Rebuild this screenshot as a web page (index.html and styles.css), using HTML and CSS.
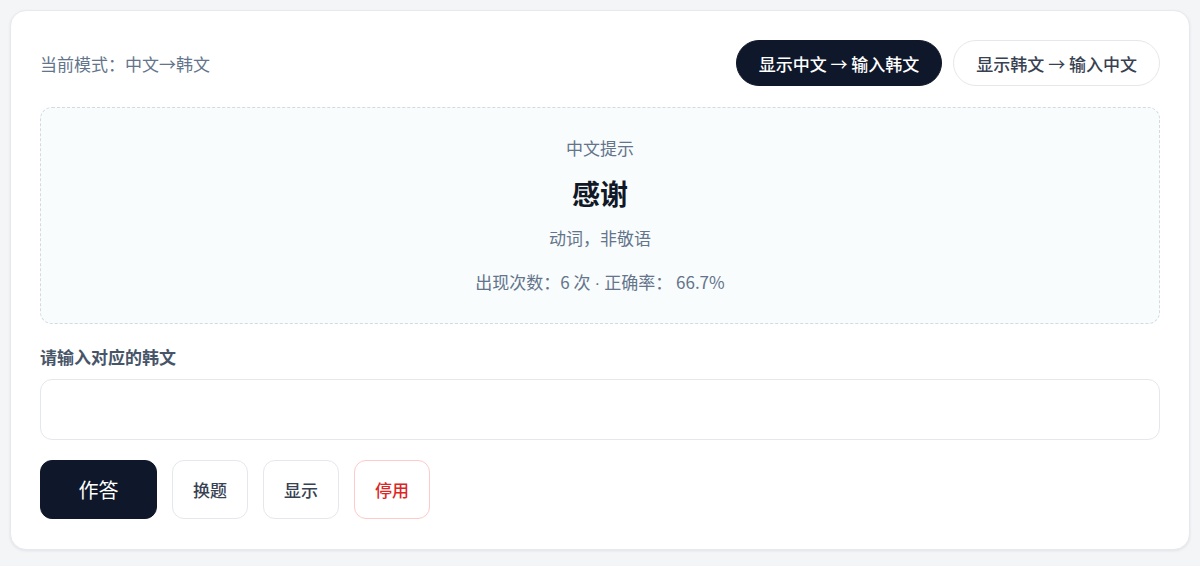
FILE: index.html
```html
<!DOCTYPE html>
<html lang="zh-CN">
<head>
<meta charset="utf-8">
<link rel="stylesheet" href="styles.css">
</head>
<body>
<div class="card">
  <div class="top">
    <div class="mode">当前模式：中文→韩文</div>
    <div class="modes">
      <button class="pill active">显示中文 <span class="arrow">→</span> 输入韩文</button>
      <button class="pill">显示韩文 <span class="arrow">→</span> 输入中文</button>
    </div>
  </div>
  <div class="hint">
    <div class="hint-label">中文提示</div>
    <div class="word">感谢</div>
    <div class="note">动词，非敬语</div>
    <div class="stats">出现次数：6 次<span class="dot">·</span>正确率： 66.7%</div>
  </div>
  <div class="field-label">请输入对应的韩文</div>
  <input class="answer" type="text">
  <div class="actions">
    <button class="btn primary">作答</button>
    <button class="btn">换题</button>
    <button class="btn">显示</button>
    <button class="btn danger">停用</button>
  </div>
</div>
</body>
</html>
```
FILE: styles.css
```css
* { box-sizing: border-box; }
html, body { margin: 0; padding: 0; }
body {
  background: #f3f5f7;
  font-family: "Noto Sans CJK SC", "Noto Sans", sans-serif;
  padding: 10px;
  height: 566px;
}
.card {
  background: #fff;
  border: 1px solid #e6e9ee;
  border-radius: 16px;
  box-shadow: 0 1px 3px rgba(15, 23, 42, 0.08);
  padding: 29px;
  height: 540px;
}
.top {
  display: flex;
  align-items: center;
  justify-content: space-between;
  height: 46px;
}
.mode {
  font-size: 17px;
  color: #64748b;
}
.modes { display: flex; gap: 11px; }
.pill {
  font-family: inherit;
  font-size: 17px;
  font-weight: 500;
  height: 46px;
  padding: 0 22px;
  border-radius: 23px;
  border: 1px solid #e5e7eb;
  background: #fff;
  color: #374151;
  cursor: pointer;
}
.pill .arrow {
  font-weight: 400;
}
.pill.active {
  background: #0f172a;
  border-color: #0f172a;
  color: #fff;
}
.hint {
  margin-top: 21px;
  height: 217px;
  border: 1px dashed #d4dae2;
  border-radius: 12px;
  background: #f8fcfd;
  display: flex;
  flex-direction: column;
  align-items: center;
  padding-top: 28px;
}
.hint-label { font-size: 17px; color: #64748b; line-height: 24px; }
.word { font-size: 28px; font-weight: 700; color: #111827; line-height: 40px; margin-top: 13px; }
.note { font-size: 17px; color: #64748b; line-height: 24px; margin-top: 13px; }
.stats { font-size: 17px; color: #64748b; line-height: 24px; margin-top: 20px; }
.stats .dot { font-family: "Liberation Sans", sans-serif; margin: 0 4px; }
.field-label {
  margin-top: 21px;
  font-size: 17px;
  font-weight: 600;
  color: #475569;
  line-height: 24px;
}
.answer {
  display: block;
  width: 100%;
  margin-top: 10px;
  height: 61px;
  border: 1px solid #e5e7eb;
  border-radius: 12px;
  background: #fff;
  font-family: inherit;
  font-size: 17px;
  padding: 0 16px;
  outline: none;
}
.actions {
  display: flex;
  gap: 15px;
  margin-top: 20px;
}
.btn {
  font-family: inherit;
  height: 59px;
  width: 76px;
  border-radius: 12px;
  border: 1px solid #e5e7eb;
  background: #fff;
  color: #374151;
  font-size: 17px;
  font-weight: 500;
  cursor: pointer;
}
.btn.primary {
  width: 117px;
  background: #0f172a;
  border-color: #0f172a;
  color: #fff;
  font-size: 20px;
  font-weight: 400;
}
.btn.danger {
  color: #dc2626;
  border-color: #fecaca;
}
```
